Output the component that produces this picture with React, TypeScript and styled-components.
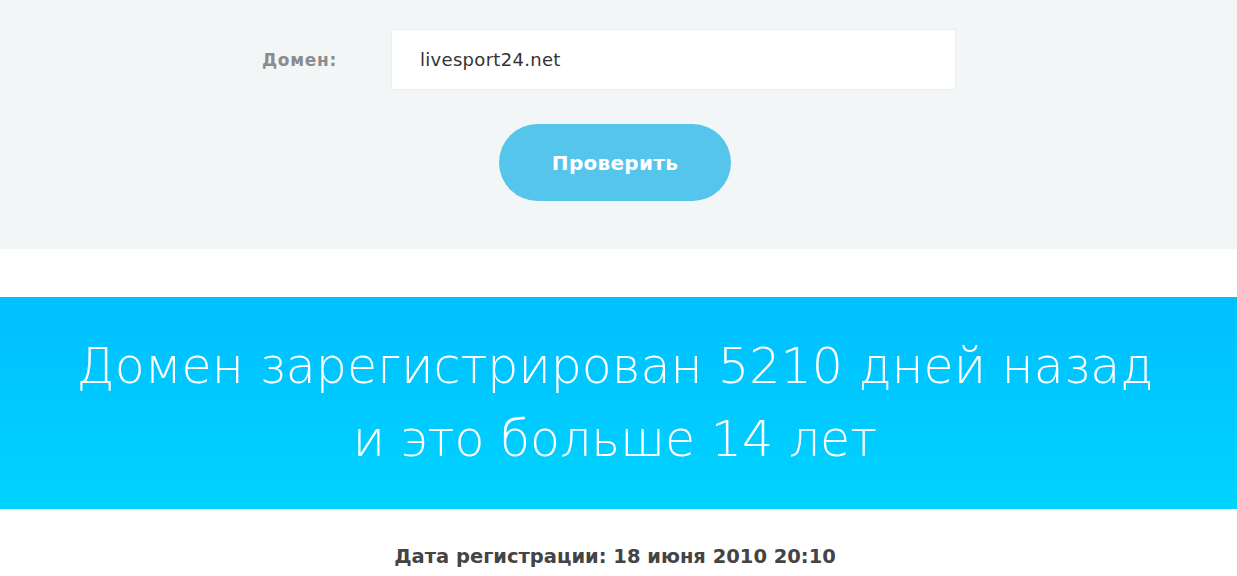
import styled, { createGlobalStyle } from "styled-components";

const GlobalStyle = createGlobalStyle`
  html, body {
    margin: 0;
    padding: 0;
    background: #ffffff;
    font-family: "DejaVu Sans", "Open Sans", sans-serif;
  }
  * { box-sizing: border-box; }
`;

const CheckSection = styled.section`
  background: #f3f6f7;
  height: 249px;
  padding: 29px 7px 0 0;
  display: flex;
  flex-direction: column;
  align-items: center;
`;

const FieldRow = styled.div`
  display: flex;
  align-items: center;
  width: 696px;
  margin-right: 14px;
`;

const Label = styled.label`
  width: 131px;
  padding-left: 2px;
  font-family: "DejaVu Sans", sans-serif;
  font-weight: 700;
  font-size: 17px;
  letter-spacing: 0.7px;
  color: #8c8c8c;
`;

const DomainInput = styled.input`
  width: 565px;
  height: 61px;
  border: 1px solid #e9eef0;
  background: #ffffff;
  padding: 0 28px;
  font-family: "DejaVu Sans", sans-serif;
  font-size: 18px;
  letter-spacing: 0.3px;
  color: #333333;
  outline: none;
`;

const SubmitButton = styled.button`
  margin-top: 34px;
  width: 232px;
  height: 77px;
  border: none;
  border-radius: 39px;
  background: #56c5ec;
  color: #ffffff;
  font-family: "DejaVu Sans", sans-serif;
  font-weight: 700;
  font-size: 20px;
  letter-spacing: 0.3px;
  cursor: pointer;
`;

const Spacer = styled.div`
  height: 48px;
`;

const Banner = styled.section`
  height: 212px;
  padding-right: 7px;
  background: linear-gradient(180deg, #00bfff 0%, #00d3ff 100%);
  display: flex;
  align-items: center;
  justify-content: center;
`;

const BannerTitle = styled.h1`
  margin: 0;
  text-align: center;
  color: #ffffff;
  font-family: "DejaVu Sans", sans-serif;
  font-weight: 200;
  font-size: 49px;
  line-height: 73px;
`;

const Details = styled.div`
  padding: 36px 7px 0 0;
  text-align: center;
  font-family: "DejaVu Sans", sans-serif;
  font-weight: 700;
  font-size: 19.5px;
  color: #444444;
`;

export default function App() {
  return (
    <>
      <GlobalStyle />
      <CheckSection>
        <FieldRow>
          <Label htmlFor="domain">Домен:</Label>
          <DomainInput id="domain" defaultValue="livesport24.net" />
        </FieldRow>
        <SubmitButton type="button">Проверить</SubmitButton>
      </CheckSection>
      <Spacer />
      <Banner>
        <BannerTitle>
          Домен зарегистрирован 5210 дней назад
          <br />и это больше 14 лет
        </BannerTitle>
      </Banner>
      <Details>Дата регистрации: 18 июня 2010 20:10</Details>
    </>
  );
}
